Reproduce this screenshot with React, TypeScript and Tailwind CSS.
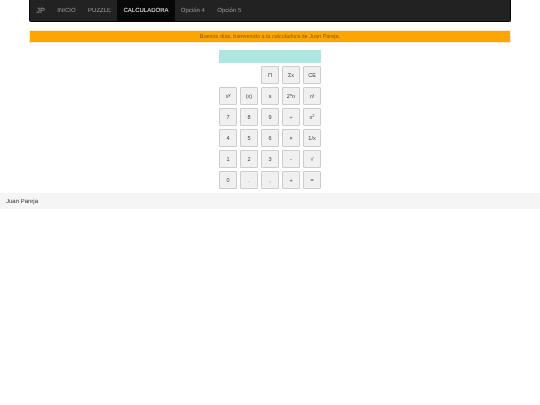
import type { ReactNode } from "react";

const sup = (base: string, exp: string, rest = "") => (
  <span>
    {base}
    <sup className="text-[4px]">{exp}</sup>
    {rest}
  </span>
);

const ROWS: ReactNode[][] = [
  ["", "", "Π", "Σx", "CE"],
  [sup("x", "y"), "(x)", "s", sup("2", "n", "n"), "n!"],
  ["7", "8", "9", "÷", sup("x", "2")],
  ["4", "5", "6", "×", "1/x"],
  ["1", "2", "3", "-", "√"],
  ["0", ".", ",", "+", "="],
];

const NAV = ["INICIO", "PUZZLE", "CALCULADORA", "Opción 4", "Opción 5"];

export default function App() {
  return (
    <div className="min-h-[405px] bg-white font-['Liberation_Sans',Arial,sans-serif] text-[#333] blur-[0.3px] [text-rendering:geometricPrecision]">
      <div className="pl-[29.3px] pr-[29.5px]">
        {/* Navbar */}
        <nav className="flex h-[22px] items-stretch rounded-b-[2px] border border-t-0 border-[#080808] bg-[#222]">
          <span className="flex items-center pl-[6px] pr-[6.1px] pt-[1px] text-[7.5px] text-[#9d9d9d]">JP</span>
          {NAV.map((item) => (
            <a
              key={item}
              className={
                item === "CALCULADORA"
                  ? "flex items-center bg-[#080808] px-[6.2px] pt-[1.5px] text-[6px] text-white"
                  : "flex items-center px-[6.2px] pt-[1.5px] text-[6px] text-[#9d9d9d]"
              }
            >
              {item}
            </a>
          ))}
        </nav>

        {/* Saludo */}
        <div className="mt-[8px] flex h-[12.5px] items-center justify-center rounded-[1px] border border-[#faebcc] bg-[#ffa500] pt-[1px] text-[5.5px] text-[#7a5a20]">
          Buenos días, bienvenido a la calculadora de Juan Pareja.
        </div>
      </div>

      {/* Calculadora */}
      <div className="mx-auto mt-[7.5px] w-[102px]">
        <div className="h-[13px] bg-[#aee6e0]" />
        <div className="mt-[3px] grid grid-cols-5 gap-[3px]">
          {ROWS.flat().map((label, i) =>
            label === "" ? (
              <div key={i} className="h-[18px]" />
            ) : (
              <button
                key={i}
                className="flex h-[18px] items-center justify-center rounded-[1px] border border-[#ccc] bg-[#f0f0f0] text-[5.5px] text-[#444]"
              >
                {label}
              </button>
            )
          )}
        </div>
      </div>

      {/* Footer */}
      <footer className="mt-[4px] flex h-[16px] items-center bg-[#f5f5f5] pl-[6px] pt-[2px] text-[6px] text-[#333]">
        Juan Pareja
      </footer>
    </div>
  );
}
